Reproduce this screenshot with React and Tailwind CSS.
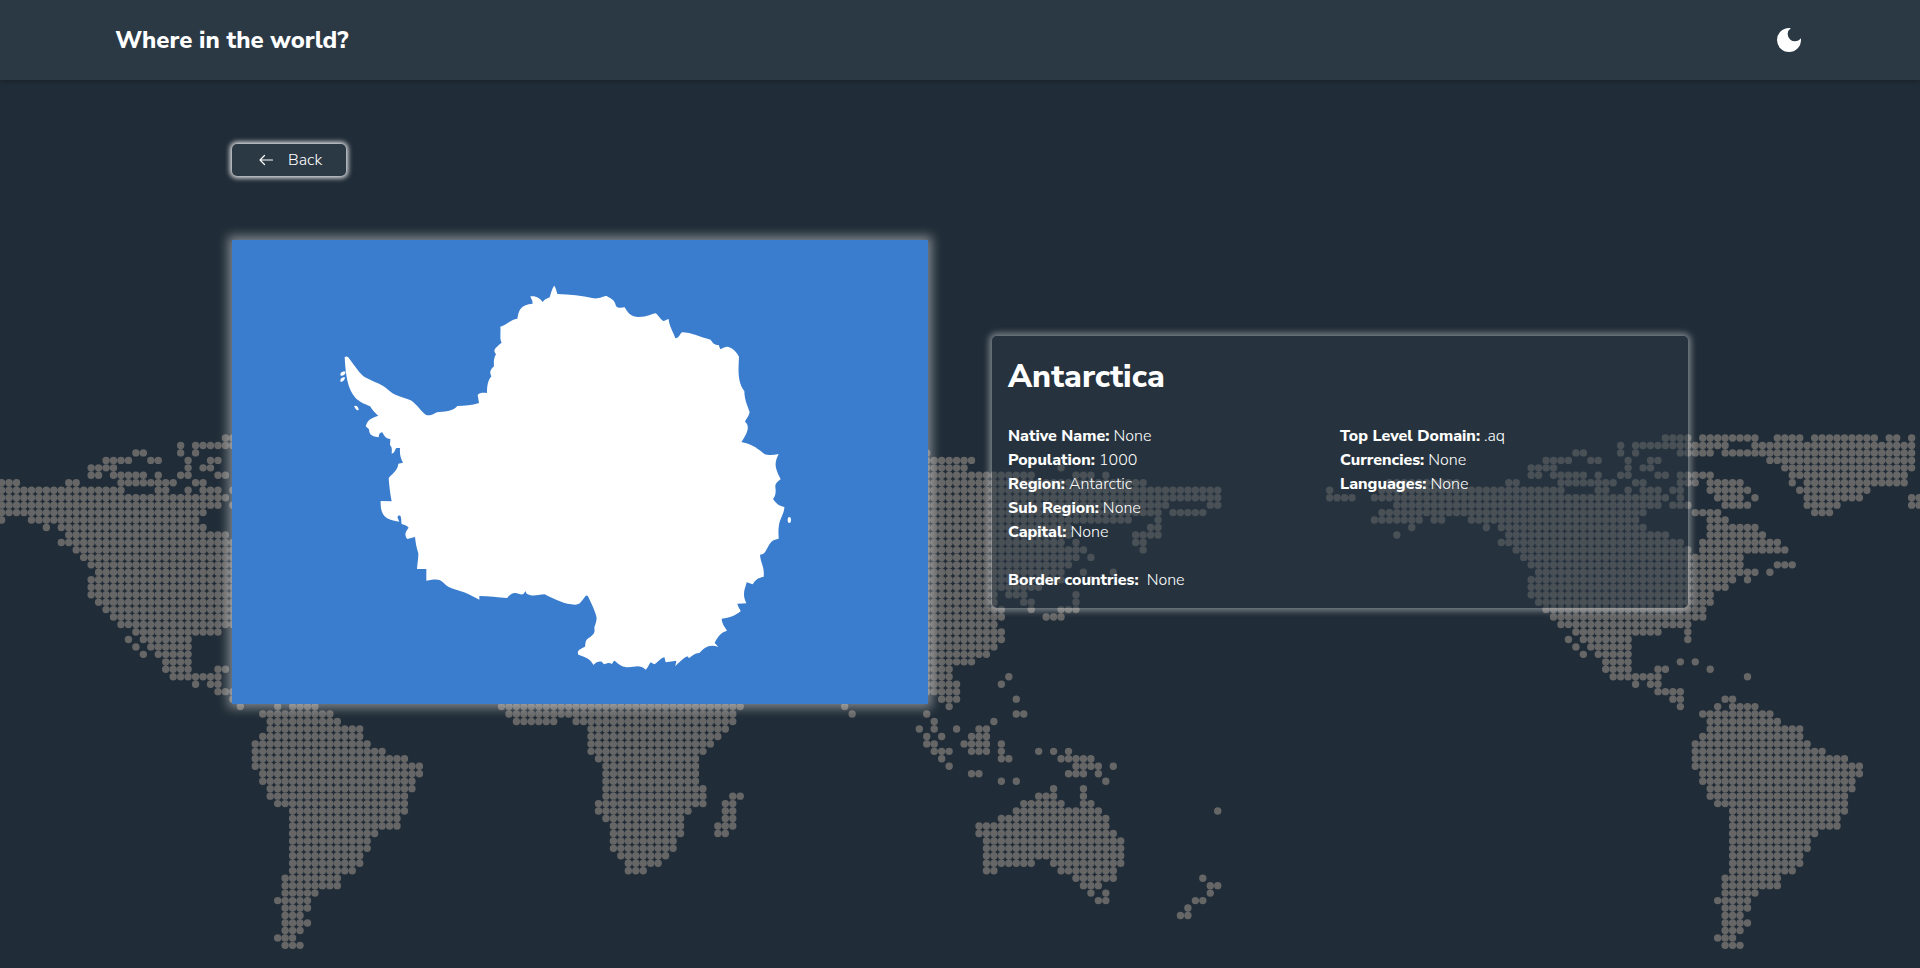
import React from "react";
import { MdDarkMode } from "react-icons/md";

// Dotted world map: one entry per row, each entry a list of column ranges.
const MAP_ROWS = [
  "30-33 35-42 45-48 50-58 60-61 63",
  "24 26-38 42-63",
  "18-19 24 26 32-36 38-63 120-124",
  "14-17 20-21 25 28-29 44-63 120-130",
  "12-15 25 27-28 46-63 120-129 142",
  "12-13 15-19 21 24-25 29-30 32-36 47-62 120-138 144-146 148",
  "0-2 9-10 16-23 26-27 32-34 36-40 47 49-62 120-153 186-192",
  "0-16 21-22 25 27-29 31-32 36-41 48-57 120-163 178 185-192",
  "0-30 32 37-40 42 49-56 63-64 120-163 178-181 184-192",
  "0-29 31-33 38-41 49-53 63-64 120-156 162-163 187-192",
  "0-27 34-37 50-52 120-155 157-161 185-192",
  "0 4-26 36-38 120-151 155 184-190 192",
  "6 8-27 36-42 120-143 154-155 189",
  "9-30 36-43 120-143 152-155 187",
  "8-32 35-45 120-142 144 152-153",
  "10-33 35-46 120-145 153",
  "11-40 120-144 146",
  "12-40 45-47 120-143",
  "13-42 44 120-142 145 149",
  "12-39 41 120-142 146",
  "12-38 120-139",
  "12-36 120-133 135-137 144",
  "13-36 120-133 137-138 144",
  "14-35 120-134 138 142-144",
  "15-35 120-134 140-142",
  "16-33 120-133",
  "18-29 33 120-134",
  "17 19-25 33 120-134",
  "18 20-25 120-133",
  "19 21-25 120-132",
  "22-25 32 34 120-130",
  "22-25 29-30 36 120-127",
  "23-29 41 120-127 135",
  "26 28-29 120-128 134",
  "29-32 120-128",
  "31-32 38-39 126-128 136",
  "32 37 39-42 67-99 113 127",
  "35-44 68-98 114 124 136-137",
  "36-45 69-74 77-98 125 133",
  "36-48 79-97 123 125 128 131-132",
  "35-48 79-96 124 126 130-132",
  "34-49 79-95 124-125 129-132 134",
  "34-51 79-94 125-127 130-132 134 139 141 143",
  "34-54 80-93 126 134-135 142-146",
  "34-56 81-93 127 144-147 149",
  "35-56 81-93 130-131 143-145 147",
  "35-55 81-93 134 136 148",
  "36-55 81-94 141 145",
  "36-54 81-94 98-99 139-141 145",
  "37-54 80-94 97-98 137-142 145-146",
  "39-54 80-92 97-98 136-147 163",
  "39-53 81-91 97-98 134-148",
  "39-53 82-91 96-98 131-148",
  "39-50 82-91 96-97 131-149",
  "39-49 82-90 132-150",
  "39-49 82-90 132-150",
  "39-48 83-89 132-150",
  "39-48 84-88 132-138 141-150",
  "39-47 84-86 132-133 142-149",
  "38-45 144-149 161",
  "38-45 145-147 162-163",
  "38-42 146 148 162",
  "37-41 147-148 160-161",
  "38-41 159",
  "38-40 158-159",
  "38-41",
  "38-40",
  "37-39",
  "38-40",
];

const PITCH = 7.461;
const TILE = 1440;

// Each range is a short line; the round-capped zero-length dashes draw the dots.
const MAP_PATH = MAP_ROWS.map((row, r) =>
  row
    .split(" ")
    .map((range) => {
      const [from, to = from] = range.split("-").map(Number);
      const x = (1.6 + from * PITCH).toFixed(2);
      const y = (438 + r * PITCH).toFixed(2);
      return `M${x} ${y}h${((to - from) * PITCH + 0.5).toFixed(2)}`;
    })
    .join("")
).join("");

function WorldMap() {
  return (
    <svg
      aria-hidden="true"
      viewBox="0 0 1920 968"
      preserveAspectRatio="xMidYMin slice"
      className="col-start-1 row-start-1 h-full w-full"
      fill="none"
      stroke="#666666"
      strokeWidth="7.4"
      strokeLinecap="round"
      strokeDasharray={`0 ${PITCH}`}
    >
      <path d={MAP_PATH} />
      <path d={MAP_PATH} transform={`translate(${TILE} 0)`} />
    </svg>
  );
}

function Flag() {
  return (
    <svg
      role="img"
      aria-label="Flag of Antarctica"
      viewBox="0 0 2088 1392"
      className="block h-auto w-full bg-[#3a7dce] shadow-[0_0_10px_4px_rgba(255,255,255,0.42)]"
      fill="#ffffff"
    >
      <g transform="translate(264 60)">
        <path d="M703 77C707 82 709 92 712 102C750 103 785 107 820 115C840 117 848 108 860 108C872 116 884 118 888 138C895 146 905 143 914 142C925 162 935 170 955 171C985 171 995 161 1007 160C1015 165 1022 180 1030 183C1036 183 1040 178 1046 177C1047 198 1060 215 1066 235C1078 235 1078 222 1086 217C1115 217 1140 232 1172 239C1178 250 1184 254 1196 255L1201 268C1212 263 1218 259 1226 261C1240 266 1250 277 1257 290C1255 330 1252 365 1273 393C1273 420 1284 440 1289 457C1287 468 1279 476 1275 485C1290 497 1284 517 1264 546C1290 552 1305 558 1333 582C1345 587 1362 585 1376 582C1362 610 1364 622 1382 658C1362 672 1366 678 1367 690C1367 705 1364 711 1359 717C1368 731 1378 739 1393 741C1393 760 1380 775 1377 795C1374 812 1376 824 1376 836C1350 840 1348 855 1340 868C1334 880 1330 884 1320 884C1322 910 1334 920 1331 950C1312 954 1306 960 1298 973L1280 967C1277 985 1264 998 1279 1030L1252 1031C1254 1042 1260 1046 1262 1054C1246 1066 1230 1074 1205 1076C1206 1093 1216 1102 1221 1112C1205 1116 1192 1130 1184 1149L1195 1160C1165 1152 1155 1162 1138 1179C1120 1181 1115 1190 1107 1194L1102 1189C1090 1194 1077 1208 1066 1219L1069 1202L1037 1207L1033 1191C1020 1196 1013 1206 1004 1213C998 1212 996 1208 992 1207C986 1214 983 1226 977 1229C965 1218 955 1217 940 1220C915 1224 903 1220 884 1202C879 1203 879 1209 875 1212C868 1207 862 1210 852 1213L845 1205C834 1203 826 1209 820 1215C812 1198 800 1192 775 1184C770 1172 778 1168 795 1160C797 1145 797 1140 806 1134C826 1120 824 1116 823 1102C828 1090 829 1083 830 1074C826 1054 814 1030 804 1009C800 1005 797 1007 795 1010C780 1030 779 1033 765 1034C735 1034 705 1018 674 1003C650 1005 635 1010 620 1001L616 993C613 1002 608 1004 600 1003C588 998 575 994 562 1014C535 1012 505 1008 478 1008L478 1019C455 1008 440 998 420 993C395 986 385 983 372 970C358 956 350 957 319 962L319 927L291 927C293 905 295 895 295 880C290 865 287 850 285 831L262 837C252 825 256 815 266 803C262 797 255 796 245 792C243 783 245 775 241 767C235 765 232 768 233 774L238 785C200 780 180 770 182 723L215 724C210 700 208 680 206 655C212 643 233 635 235 611L249 608C240 590 239 580 240 564L229 564C224 570 225 578 215 581C216 565 216 562 210 555L211 537C200 537 193 530 187 517C178 518 177 524 176 532C150 529 148 520 147 508L137 499C143 480 150 475 175 467C160 455 157 448 150 439C130 430 118 425 106 413C82 385 77 345 74 291C80 287 84 290 88 296C105 318 118 340 135 352C165 367 190 375 205 390C225 408 245 410 272 421C290 432 305 457 320 466C338 467 345 460 350 457C370 454 400 455 412 438C435 437 455 436 477 429L473 405C480 397 490 398 501 399C501 380 503 362 514 349C507 335 512 328 522 319C521 305 521 295 528 283C518 270 524 265 545 248C538 238 543 215 541 200C560 195 572 178 592 176C596 150 603 133 638 131C638 120 632 115 631 109C650 107 660 115 668 126C674 118 680 116 689 112C693 100 696 84 703 77Z" />
        <path d="M77 335C76 343 70 348 62 347C59 339 66 333 77 335Z" />
        <path d="M75 352C75 360 69 365 62 366C59 357 65 352 75 352Z" />
        <path d="M102 439C108 434 116 440 116 450C108 453 106 445 102 439Z" />
        <ellipse cx="1408" cy="780" rx="5" ry="9" />
      </g>
    </svg>
  );
}

function ArrowLeft() {
  return (
    <svg
      aria-hidden="true"
      viewBox="0 0 20 20"
      className="h-5 w-5"
      fill="none"
      stroke="currentColor"
      strokeWidth="1.2"
      strokeLinecap="round"
      strokeLinejoin="round"
    >
      <path d="M8.5 5.5L4 10l4.500 4.500M4 10h12.500" />
    </svg>
  );
}

function Field({ label, value }) {
  return (
    <div className="flex gap-1">
      <dt className="font-extrabold text-white">{label}:</dt>
      <dd>{value}</dd>
    </div>
  );
}

export default function App() {
  return (
    <div className="grid min-h-screen grid-cols-1 overflow-x-hidden bg-[#202c37] font-['Nunito_Sans','Nunito','Lato',sans-serif] text-base font-light text-white">
      <WorldMap />
      <div className="z-10 col-start-1 row-start-1">
        <header className="flex h-20 items-center justify-between bg-[#2b3945] px-[6%] text-white shadow-[0_2px_4px_rgba(0,0,0,0.2)]">
          <h1 className="text-2xl font-extrabold">Where in the world?</h1>
          <button type="button" aria-label="Toggle dark mode">
            <MdDarkMode className="h-8 w-8" />
          </button>
        </header>

        <main className="mx-auto max-w-[1520px] px-8 py-16">
          <button
            type="button"
            className="flex h-8 items-center gap-3 rounded-[5px] bg-[#2b3945] px-6 shadow-[0_0_5px_2px_rgba(255,255,255,0.9)]"
          >
            <ArrowLeft />
            Back
          </button>

          <div className="mt-16 grid items-center gap-16 lg:grid-cols-2">
            <Flag />
            <section className="rounded-[5px] bg-[#2b3945]/50 p-4 shadow-[0_0_6px_3px_rgba(255,255,255,0.4)]">
              <h2 className="text-[32px] leading-[50px] font-extrabold text-white">Antarctica</h2>
              <div className="mt-[22px] grid sm:grid-cols-2">
                <dl>
                  <Field label="Native Name" value="None" />
                  <Field label="Population" value="1000" />
                  <Field label="Region" value="Antarctic" />
                  <Field label="Sub Region" value="None" />
                  <Field label="Capital" value="None" />
                </dl>
                <dl>
                  <Field label="Top Level Domain" value=".aq" />
                  <Field label="Currencies" value="None" />
                  <Field label="Languages" value="None" />
                </dl>
              </div>
              <div className="mt-6 flex gap-2">
                <h3 className="font-extrabold text-white">Border countries:</h3>
                <p>None</p>
              </div>
            </section>
          </div>
        </main>
      </div>
    </div>
  );
}
